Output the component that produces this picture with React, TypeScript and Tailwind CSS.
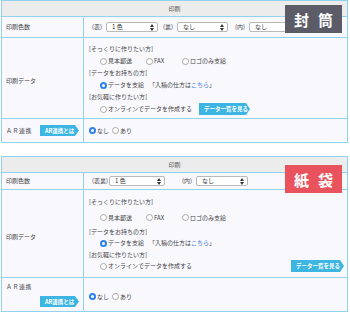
import React from "react";

const B = "border-[#8fd3ee]";

function Radio({ checked }: { checked?: boolean }) {
  return checked ? (
    <span className="inline-flex items-center justify-center w-[7px] h-[7px] rounded-full bg-[#2f80f0] mr-[1px] shrink-0">
      <span className="w-[3px] h-[3px] rounded-full bg-white" />
    </span>
  ) : (
    <span className="inline-block w-[7px] h-[7px] rounded-full border border-[#a8a8a8] bg-white mr-[1px] shrink-0" />
  );
}

function Select({ w, label }: { w: string; label: string }) {
  return (
    <div
      className={`${w} h-[10px] border border-[#b9b9b9] rounded-[2px] bg-white flex items-center justify-between pl-[5px] pr-[3px] text-[#333] shrink-0`}
    >
      <span>{label}</span>
      <svg width="4" height="7" viewBox="0 0 4 7">
        <path d="M0 3 L2 0 L4 3 Z M0 4 L2 7 L4 4 Z" fill="#333" />
      </svg>
    </div>
  );
}

function ArrowBtn({ text, w }: { text: string; w: string }) {
  return (
    <div
      className={`${w} bg-[#3db5e2] text-white font-bold text-[5.5px] flex items-center pl-[5px] whitespace-nowrap [clip-path:polygon(0_0,calc(100%-4px)_0,100%_50%,calc(100%-4px)_100%,0_100%)]`}
    >
      {text}
    </div>
  );
}

function Badge({ text, color, top }: { text: [string, string]; color: string; top: string }) {
  return (
    <div
      className={`absolute left-[283px] ${top} w-[57px] h-[28px] ${color} flex items-center justify-center gap-[9px] text-white font-bold text-[15px] leading-none`}
    >
      <span>{text[0]}</span>
      <span>{text[1]}</span>
    </div>
  );
}

export default function App() {
  return (
    <div className="w-[350px] h-[313px] bg-white font-['Noto_Sans_CJK_JP','Noto_Sans',sans-serif] text-[6px] leading-[12px] text-[#444] overflow-hidden whitespace-nowrap">
      {/* Table 1 */}
      <div className={`relative ml-[1px] w-[347px] border ${B} bg-[#f8f8fd]`}>
        <div className={`h-[16px] bg-[#ececec] border-b ${B} flex items-center justify-center text-[#555]`}>
          印刷
        </div>
        <div className={`grid grid-cols-[82px_1fr] h-[21px] border-b ${B}`}>
          <div className={`border-r ${B} pl-[4px] flex items-center`}>印刷色数</div>
          <div className="pl-[8px] flex items-center">
            <span className="w-[14px] shrink-0">(表)</span>
            <Select w="w-[52px]" label="1 色" />
            <span className="ml-[5px] w-[14px] shrink-0">(裏)</span>
            <Select w="w-[51px]" label="なし" />
            <span className="ml-[7px] w-[14px] shrink-0">(内)</span>
            <Select w="w-[52px]" label="なし" />
          </div>
        </div>
        <div className={`grid grid-cols-[82px_1fr] h-[81px] border-b ${B}`}>
          <div className={`border-r ${B} pl-[4px] flex items-center pt-[6px]`}>印刷データ</div>
          <div className="pl-[5px] pt-[5px] flex flex-col">
            <div className="h-[12px]">[そっくりに作りたい方]</div>
            <div className="h-[12px] pl-[11px] flex items-center">
              <span className="w-[46px] flex items-center"><Radio />見本郵送</span>
              <span className="w-[36px] flex items-center"><Radio />FAX</span>
              <span className="flex items-center"><Radio />ロゴのみ支給</span>
            </div>
            <div className="h-[12px]">[データをお持ちの方]</div>
            <div className="h-[12px] pl-[11px] flex items-center">
              <Radio checked />データを支給
              <span className="ml-[5px]">「入稿の仕方は<span className="text-[#3d7fe0]">こちら</span>」</span>
            </div>
            <div className="h-[12px]">[お気軽に作りたい方]</div>
            <div className="h-[12px] pl-[11px] flex items-center">
              <Radio />オンラインでデータを作成する
              <div className="ml-[7px]">
                <ArrowBtn text="データ一覧を見る" w="w-[51px] h-[12px]" />
              </div>
            </div>
          </div>
        </div>
        <div className="grid grid-cols-[82px_1fr] h-[23px]">
          <div className={`border-r ${B} pl-[4px] flex items-center`}>
            <span className="w-[34px] tracking-[0.5px]">ＡＲ連携</span>
            <ArrowBtn text="AR連携とは" w="w-[39px] h-[11px]" />
          </div>
          <div className="pl-[5px] flex items-center">
            <Radio checked />なし
            <span className="ml-[3px] flex items-center"><Radio />あり</span>
          </div>
        </div>
        <Badge text={["封", "筒"]} color="bg-[#5c5c68]" top="top-[4px]" />
      </div>

      {/* Table 2 */}
      <div className={`relative mt-[13px] ml-[1px] w-[347px] border ${B} bg-[#f8f8fd]`}>
        <div className={`h-[16px] bg-[#ececec] border-b ${B} flex items-center justify-center text-[#555]`}>
          印刷
        </div>
        <div className={`grid grid-cols-[82px_1fr] h-[17px] border-b ${B}`}>
          <div className={`border-r ${B} pl-[4px] flex items-center`}>印刷色数</div>
          <div className="pl-[8px] flex items-center">
            <span className="w-[17px] shrink-0">(表裏)</span>
            <Select w="w-[56px]" label="1 色" />
            <span className="ml-[17px] w-[14px] shrink-0">(内)</span>
            <Select w="w-[52px]" label="なし" />
          </div>
        </div>
        <div className={`grid grid-cols-[82px_1fr] h-[88px] border-b ${B}`}>
          <div className={`border-r ${B} pl-[4px] flex items-center pt-[7px]`}>印刷データ</div>
          <div className="pl-[5px] pt-[6px] flex flex-col">
            <div className="h-[12px]">[そっくりに作りたい方]</div>
            <div className="h-[19px] pl-[11px] flex items-center">
              <span className="w-[46px] flex items-center"><Radio />見本郵送</span>
              <span className="w-[36px] flex items-center"><Radio />FAX</span>
              <span className="flex items-center"><Radio />ロゴのみ支給</span>
            </div>
            <div className="h-[10px] flex items-center">[データをお持ちの方]</div>
            <div className="h-[12px] pl-[11px] flex items-center">
              <Radio checked />データを支給
              <span className="ml-[5px]">「入稿の仕方は<span className="text-[#3d7fe0]">こちら</span>」</span>
            </div>
            <div className="h-[11px] flex items-center">[お気軽に作りたい方]</div>
            <div className="h-[12px] pl-[11px] pr-[3px] flex items-center">
              <Radio />オンラインでデータを作成する
              <div className="ml-auto">
                <ArrowBtn text="データ一覧を見る" w="w-[53px] h-[12px]" />
              </div>
            </div>
          </div>
        </div>
        <div className="grid grid-cols-[82px_1fr] h-[33px]">
          <div className={`border-r ${B} pl-[4px] flex flex-col pt-[3px]`}>
            <span className="h-[12px] tracking-[0.5px]">ＡＲ連携</span>
            <div className="ml-[34px] mt-[3px]">
              <ArrowBtn text="AR連携とは" w="w-[39px] h-[11px]" />
            </div>
          </div>
          <div className="pl-[5px] flex items-center pt-[4px]">
            <Radio checked />なし
            <span className="ml-[3px] flex items-center"><Radio />あり</span>
          </div>
        </div>
        <Badge text={["紙", "袋"]} color="bg-[#e9535d]" top="top-[8px]" />
      </div>
    </div>
  );
}
